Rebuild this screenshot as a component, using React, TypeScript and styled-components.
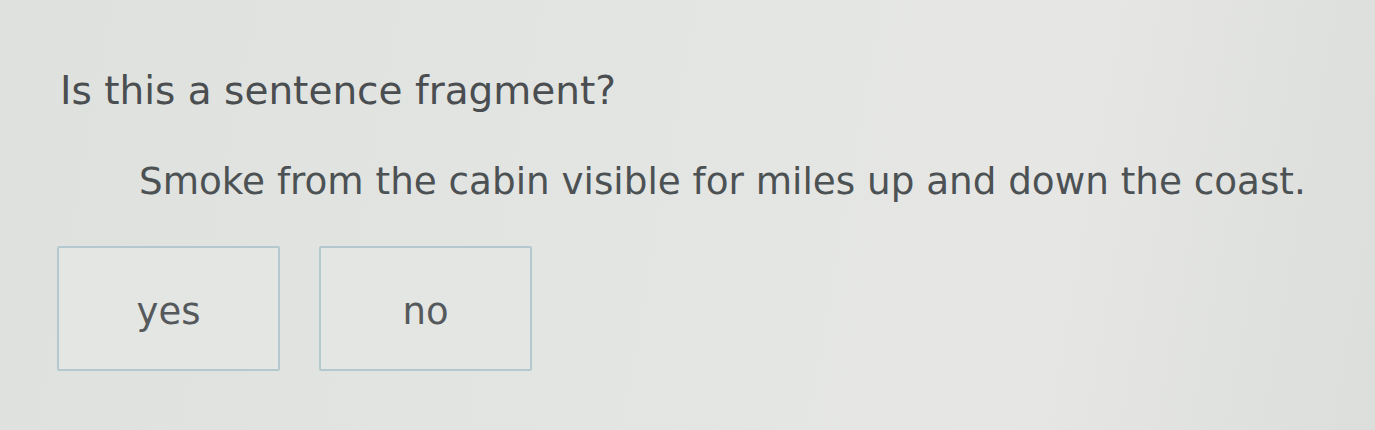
import React from "react";
import styled, { createGlobalStyle } from "styled-components";

const Global = createGlobalStyle`
  html, body { margin: 0; padding: 0; }
  body {
    width: 1375px;
    height: 430px;
    overflow: hidden;
    background: linear-gradient(100deg, #dfe1de 0%, #e3e5e2 45%, #e6e7e4 75%, #dcdedb 100%);
    font-family: "DejaVu Sans", Verdana, sans-serif;
    color: #4b5053;
  }
`;

const Page = styled.div`
  display: flex;
  flex-direction: column;
  padding: 67px 0 0 60px;
`;

const Question = styled.h1`
  margin: 0;
  font-size: 39px;
  font-weight: normal;
  line-height: 48px;
  color: #4a4e51;
`;

const Passage = styled.p`
  margin: 42px 0 0 79px;
  font-size: 37.3px;
  line-height: 48px;
  color: #4c5154;
`;

const Choices = styled.div`
  display: flex;
  gap: 39px;
  margin: 41px 0 0 -3px;
`;

const Choice = styled.button<{ $w: number }>`
  width: ${(p) => p.$w}px;
  height: 125px;
  display: flex;
  align-items: center;
  justify-content: center;
  background: #e4e6e3;
  border: 2px solid #b3c9cf;
  border-radius: 2px;
  font-family: "DejaVu Sans", Verdana, sans-serif;
  font-size: 37px;
  color: #55595c;
  padding: 6px 0 0;
  cursor: pointer;
`;

export default function App() {
  return (
    <>
      <Global />
      <Page>
        <Question>Is this a sentence fragment?</Question>
        <Passage>Smoke from the cabin visible for miles up and down the coast.</Passage>
        <Choices>
          <Choice $w={223}>yes</Choice>
          <Choice $w={213}>no</Choice>
        </Choices>
      </Page>
    </>
  );
}
